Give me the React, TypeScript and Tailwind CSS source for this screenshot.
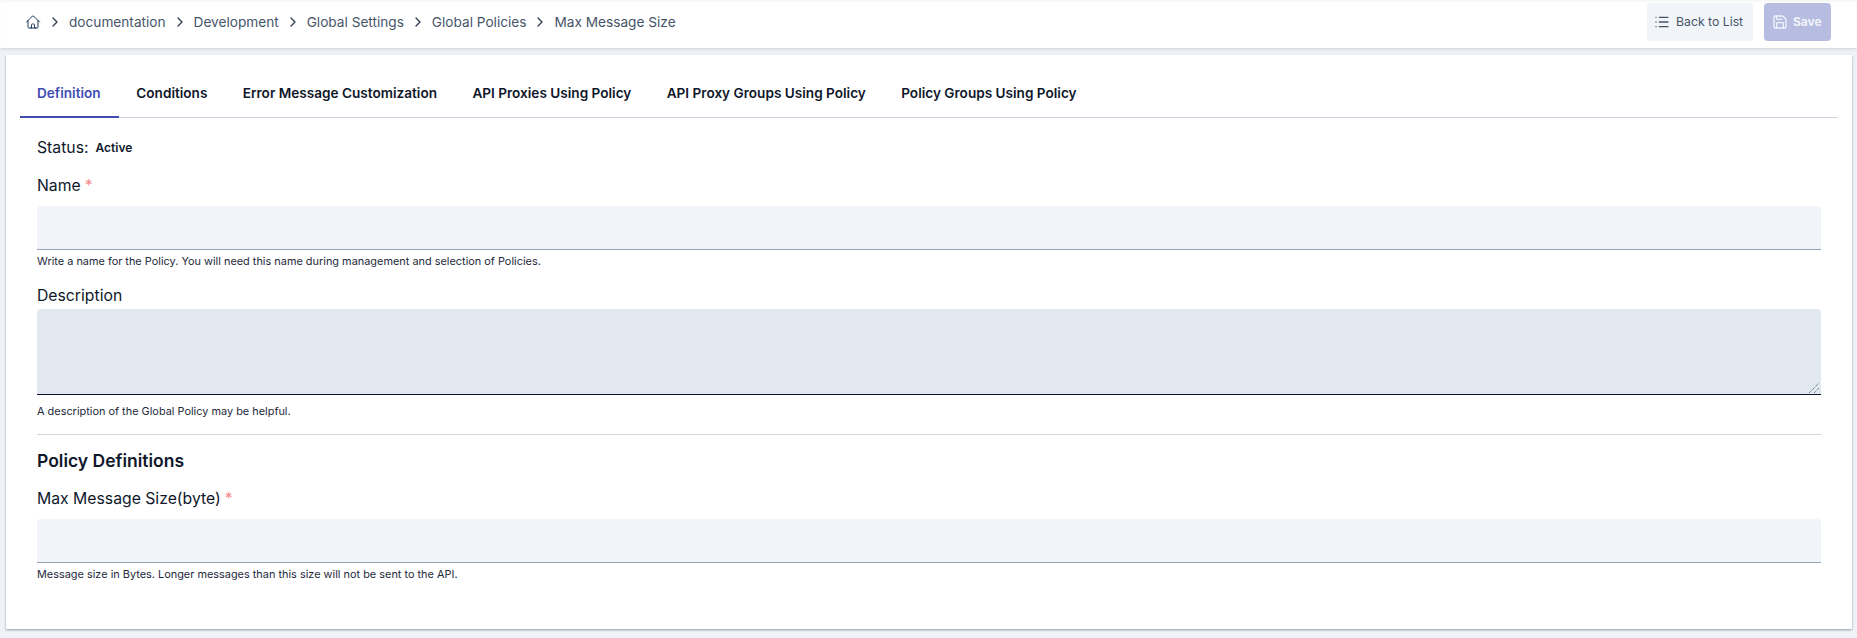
import React from 'react';
import { ChevronRight, List, Save } from 'lucide-react';
import { HiOutlineHome } from 'react-icons/hi2';

const crumbs = ['documentation', 'Development', 'Global Settings', 'Global Policies', 'Max Message Size'];
const tabs = [
  'Definition',
  'Conditions',
  'Error Message Customization',
  'API Proxies Using Policy',
  'API Proxy Groups Using Policy',
  'Policy Groups Using Policy',
];

function Label({ children, required }: { children: React.ReactNode; required?: boolean }) {
  return (
    <label className="block text-[15.75px] leading-6 text-[#0f172a]">
      {children}
      {required && <span className="ml-1 text-[#f58a8a]">*</span>}
    </label>
  );
}

export default function App() {
  return (
    <div className="h-[638px] overflow-hidden bg-[#eff3f8] font-['Inter',sans-serif]">
      <header className="flex h-12 items-center justify-between bg-white pb-1 pl-[25px] pr-[26px] shadow-[0_1px_3px_rgba(15,23,42,0.15),inset_0_2px_2px_rgba(15,23,42,0.04)]">
        <nav className="flex items-center text-[13.65px] text-[#475569]">
          <HiOutlineHome className="h-4 w-4 text-[#1e3a5f]" />
          {crumbs.map((c) => (
            <React.Fragment key={c}>
              <ChevronRight className="mx-[6px] h-4 w-4 text-[#334155]" strokeWidth={2} />
              <span>{c}</span>
            </React.Fragment>
          ))}
        </nav>
        <div className="flex items-center gap-[11px]">
          <button className="flex h-[38px] w-[106px] items-center gap-[6px] rounded bg-[#f1f5f9] pl-[7px] text-[12.25px] text-[#475569]">
            <List className="h-4 w-4" />
            Back to List
          </button>
          <button className="flex h-[38px] w-[67px] items-center gap-[5px] rounded bg-[#b6bde0] pl-[8px] text-xs font-bold text-[#f1f3fa]">
            <Save className="h-4 w-4" />
            Save
          </button>
        </div>
      </header>

      <main className="ml-[6px] mr-[5px] mt-[7px] h-[574px] bg-white pl-[14px] pr-[14px] pt-[1px] shadow-[0_1px_2px_rgba(15,23,42,0.4)]">
        <div className="mt-[13px] flex h-[49px] border-b border-[#cbd5e1]">
          {tabs.map((t, i) => (
            <div
              key={t}
              className={
                i === 0
                  ? "-mb-px flex items-center border-b-2 border-[#3f4db3] pl-[17px] pr-[18px] pt-[2px] text-[13.6px] font-semibold text-[#3f4db3]"
                  : "flex items-center px-[17.7px] text-[13.6px] font-semibold text-[#0f172a]"
              }
            >
              {t}
            </div>
          ))}
        </div>

        <div className="pl-[17px] pr-[17px]">
          <div className="mt-[18px] flex items-center gap-[7px] text-[15.75px] leading-6 text-[#0f172a]">
            Status:
            <span className="text-xs font-semibold">Active</span>
          </div>

          <div className="mt-[14px]">
            <Label required>Name</Label>
          </div>
          <div className="mt-[8px] h-[44px] rounded-t border-b border-[#94a3b8] bg-[#f1f5f9]" />
          <p className="mt-[3px] text-[10.92px] leading-4 text-[#1e293b]">
            Write a name for the Policy. You will need this name during management and selection of Policies.
          </p>

          <div className="mt-[15px]">
            <Label>Description</Label>
          </div>
          <div className="relative mt-[1px] h-[86px] rounded-t border-b border-[#0f172a] bg-[#e2e8f0]">
            <svg className="absolute bottom-0 right-[1px] h-3 w-3 text-[#475569]" viewBox="0 0 12 12" fill="none" stroke="currentColor" strokeDasharray="1 1">
              <path d="M1 11 L11 1 M6 11 L11 6" />
            </svg>
          </div>
          <p className="mt-[8px] text-[10.92px] leading-4 text-[#1e293b]">
            A description of the Global Policy may be helpful.
          </p>

          <hr className="mt-[15px] border-[#d1d5db]" />

          <h3 className="mt-[14px] text-[17.5px] font-semibold leading-6 text-[#0f172a]">Policy Definitions</h3>

          <div className="mt-[14px]">
            <Label required>Max Message Size(byte)</Label>
          </div>
          <div className="mt-[8px] h-[44px] rounded-t border-b border-[#94a3b8] bg-[#f1f5f9]" />
          <p className="mt-[3px] text-[10.92px] leading-4 text-[#1e293b]">
            Message size in Bytes. Longer messages than this size will not be sent to the API.
          </p>
        </div>
      </main>
    </div>
  );
}
